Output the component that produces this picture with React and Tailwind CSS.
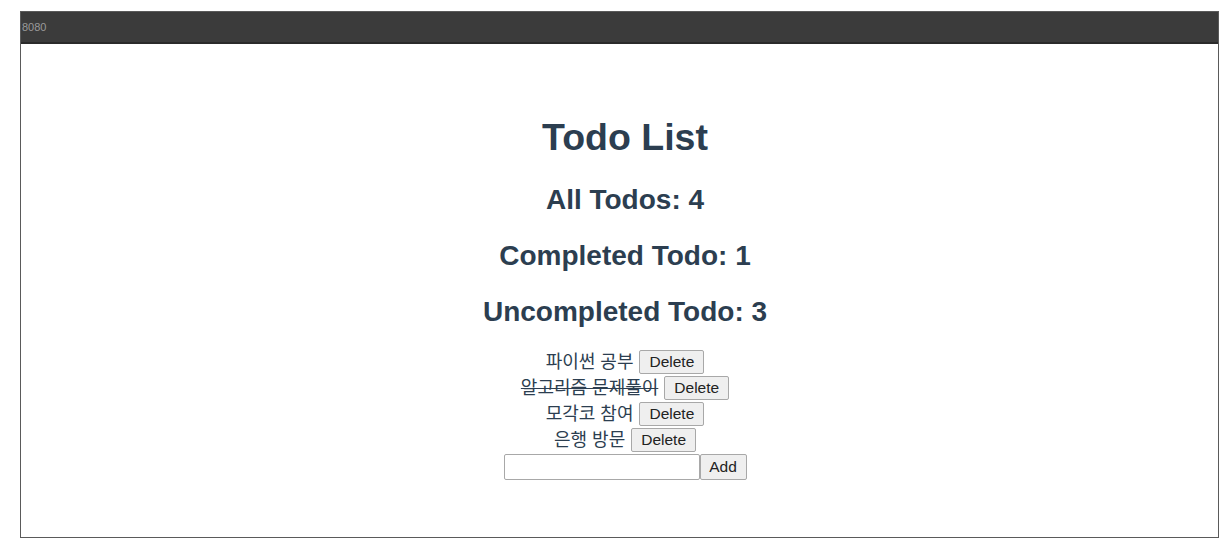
import React, { useState } from 'react';

const initialTodos = [
  { id: 1, text: '파이썬 공부', completed: false },
  { id: 2, text: '알고리즘 문제풀이', completed: true },
  { id: 3, text: '모각코 참여', completed: false },
  { id: 4, text: '은행 방문', completed: false },
];

const App = () => {
  const [todos, setTodos] = useState(initialTodos);
  const [newTodo, setNewTodo] = useState('');

  const completedCount = todos.filter((t) => t.completed).length;

  const addTodo = () => {
    if (!newTodo.trim()) return;
    setTodos([...todos, { id: Date.now(), text: newTodo, completed: false }]);
    setNewTodo('');
  };

  const deleteTodo = (id) => setTodos(todos.filter((t) => t.id !== id));

  const toggleTodo = (id) =>
    setTodos(todos.map((t) => (t.id === id ? { ...t, completed: !t.completed } : t)));

  return (
    <div className="w-[1230px] h-[547px] bg-white pt-[11px] pl-[20px] font-['Liberation_Sans','Noto_Sans_CJK_KR',sans-serif]">
      <div className="w-[1199px] h-[527px] border border-[#5a5a5a] flex flex-col">
        {/* Window bar */}
        <div className="h-[32px] bg-[#3b3b3b] border-b-2 border-[#2a2a2a] flex items-center px-[1px]">
          <span className="text-[11px] text-[#9a9a9a] leading-none">8080</span>
        </div>

        {/* App */}
        <div className="flex flex-col items-center text-[#2c3e50] pt-[72px] pl-[11px]">
          <h1 className="text-[37.5px] font-bold leading-[42px]">Todo List</h1>
          <h2 className="mt-[26px] text-[28px] font-bold leading-[32px]">All Todos: {todos.length}</h2>
          <h2 className="mt-[24px] text-[28px] font-bold leading-[32px]">Completed Todo: {completedCount}</h2>
          <h2 className="mt-[24px] text-[28px] font-bold leading-[32px]">
            Uncompleted Todo: {todos.length - completedCount}
          </h2>

          <ul className="mt-[21px] flex flex-col items-center">
            {todos.map((todo) => (
              <li key={todo.id} className="h-[26px] flex items-center gap-[6px]">
                <span
                  onClick={() => toggleTodo(todo.id)}
                  className={`text-[18px] leading-none cursor-pointer ${todo.completed ? 'line-through' : ''}`}
                >
                  {todo.text}
                </span>
                <button
                  onClick={() => deleteTodo(todo.id)}
                  className="h-[24px] px-[9px] text-[15.5px] leading-none text-[#222] bg-[#efefef] border border-[#a8a8a8] rounded-[2px] font-['Liberation_Sans',sans-serif]"
                >
                  Delete
                </button>
              </li>
            ))}
          </ul>

          <div className="mt-[1px] flex items-center">
            <input
              type="text"
              value={newTodo}
              onChange={(e) => setNewTodo(e.target.value)}
              className="w-[196px] h-[26px] border border-[#a8a8a8] rounded-[2px] px-1 text-[15px] outline-none"
            />
            <button
              onClick={addTodo}
              className="h-[26px] w-[47px] text-[15.5px] leading-none text-[#222] bg-[#efefef] border border-[#a8a8a8] rounded-[2px]"
            >
              Add
            </button>
          </div>
        </div>
      </div>
    </div>
  );
};

export default App;
